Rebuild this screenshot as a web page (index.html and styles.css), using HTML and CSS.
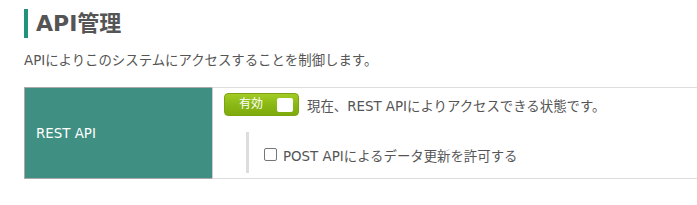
FILE: index.html
```
<!DOCTYPE html>
<html lang="ja">
  <head>
    <meta charset="UTF-8" />
    <title>API管理</title>
    <link rel="stylesheet" href="styles.css">
  </head>
  <body>
    <h2 class="page-title">API管理</h2>
    <p class="description">APIによりこのシステムにアクセスすることを制御します。</p>
    <div class="setting-table">
      <div class="setting-label">REST API</div>
      <div class="setting-body">
        <div class="status-row">
          <label class="toggle">
            <span class="toggle-text">有効</span>
            <span class="toggle-knob"></span>
          </label>
          <span class="status-text">現在、REST APIによりアクセスできる状態です。</span>
        </div>
        <div class="sub-option">
          <label class="check">
            <input type="checkbox" />
            POST APIによるデータ更新を許可する
          </label>
        </div>
      </div>
    </div>
  </body>
</html>
```
FILE: styles.css
```
body {
  margin: 0;
  padding: 0 0 0 24px;
  font-family: "DejaVu Sans", "Noto Sans CJK JP", sans-serif;
  font-size: 13.4px;
  color: #555;
  background: #fff;
}

.page-title {
  margin: 9px 0 0;
  height: 29px;
  line-height: 29px;
  padding-left: 8px;
  border-left: 4px solid #21937c;
  font-size: 22px;
  font-weight: bold;
  color: #555;
}

.description {
  margin: 14px 0 0;
  line-height: 18px;
  font-size: 13.4px;
  color: #555;
}

.setting-table {
  display: flex;
  margin-top: 17px;
  height: 92px;
}

.setting-label {
  width: 176px;
  flex-shrink: 0;
  display: flex;
  align-items: center;
  padding-left: 11px;
  background-color: #3f8f82;
  border: 1px solid #a9a9a9;
  border-right: none;
  color: #fff;
  font-size: 13.4px;
}

.setting-body {
  flex: 1;
  border-top: 1px solid #ddd;
  border-bottom: 1px solid #ddd;
  border-left: 1px solid #ccc;
  padding: 5px 0 4px 11px;
}

.status-row {
  display: flex;
  align-items: center;
  height: 23px;
}

.toggle {
  position: relative;
  box-sizing: border-box;
  width: 75px;
  height: 23px;
  border: 1px solid #7ea312;
  border-radius: 4px;
  background: linear-gradient(#a2cc24, #8ab815 50%, #7eab0c);
  margin-right: 8px;
}

.toggle-text {
  position: absolute;
  left: 14px;
  top: 0;
  line-height: 21px;
  font-size: 12px;
  color: #fff;
}

.toggle-knob {
  position: absolute;
  right: 5px;
  top: 4px;
  width: 16px;
  height: 14px;
  background: #fff;
  border-radius: 2px;
}

.status-text {
  font-size: 13.4px;
}

.sub-option {
  margin: 16px 0 0 22px;
  height: 41px;
  border-left: 3px solid #ddd;
  padding-left: 15px;
  display: flex;
  align-items: center;
}

.check {
  display: flex;
  align-items: center;
  font-size: 13.4px;
  padding-top: 4px;
}

.check input {
  appearance: none;
  -webkit-appearance: none;
  width: 13px;
  height: 13px;
  margin: 0 6px 0 0;
  border: 1px solid #777;
  border-radius: 2px;
  background: #fff;
}
```
